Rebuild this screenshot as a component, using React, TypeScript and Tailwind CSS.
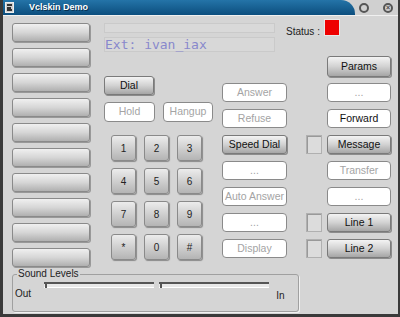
import type { ReactNode } from "react"

const font = "font-['Liberation_Sans',Arial,sans-serif]"

function Raised({ children, className = "" }: { children?: ReactNode; className?: string }) {
  return (
    <div
      className={`flex items-center justify-center rounded-[3px] border border-[#7a7a7a] bg-gradient-to-b from-[#f4f4f4] via-[#d2d2d2] to-[#a6a6a6] text-[10.5px] text-[#111] shadow-[1px_1px_0_#8c8c8c] ${className}`}
    >
      {children}
    </div>
  )
}

function Flat({ children, dark = false, className = "" }: { children?: ReactNode; dark?: boolean; className?: string }) {
  return (
    <div
      className={`flex items-center justify-center rounded-[4px] border-[1.5px] border-[#8a8a8a] bg-white text-[10.5px] ${dark ? "text-[#111]" : "text-[#a4a4a4]"} ${className}`}
    >
      {children}
    </div>
  )
}

function Key({ label }: { label: string }) {
  return (
    <div className="flex h-[26px] w-[25px] items-center justify-center rounded-[3px] border border-[#8a8a8a] bg-gradient-to-b from-[#ececec] to-[#b4b4b4] text-[10px] text-[#222] shadow-[1px_1px_1px_#8a8a8a]">
      {label}
    </div>
  )
}

function Square() {
  return <div className="h-[19px] w-[16px] border border-[#b0b0b0] bg-[#dcdcdc] shadow-[inset_1px_1px_0_#999]" />
}

function Track() {
  return (
    <div className="relative h-[5px] w-[110px] border-t-[2px] border-[#555] bg-[#e8e8e8] shadow-[0_1px_0_#fff]">
      <div className="absolute left-[1px] top-[-2px] h-[6px] w-[2px] bg-[#555]" />
    </div>
  )
}

export default function App() {
  const left = Array.from({ length: 10 })
  const keys = ["1", "2", "3", "4", "5", "6", "7", "8", "9", "*", "0", "#"]

  return (
    <div className={`${font} flex h-[317px] w-[400px] flex-col overflow-hidden border-b-[3px] border-l-[3px] border-r-[2px] border-[#3a3a3a] bg-[#d5d5d5]`}>
      {/* title bar */}
      <div className="flex h-[15px] shrink-0 items-stretch bg-[#d0d0d0]">
        <div className="flex w-[352px] items-center rounded-tr-[14px] bg-gradient-to-b from-[#2474a8] to-[#0c4e7e] pl-[2px]">
          <div className="flex h-[11px] w-[9px] flex-col justify-between border border-[#eee] bg-[#cfcfcf] p-[1px]">
            <div className="h-[2px] w-[5px] bg-[#333]" />
            <div className="h-[2px] w-[4px] bg-[#333]" />
            <div className="h-[2px] w-[5px] bg-[#333]" />
          </div>
          <span className="ml-[15px] text-[9px] font-bold text-white [text-shadow:1px_1px_0_#063050]">Vclskin Demo</span>
        </div>
        <div className="flex flex-1 items-center justify-end gap-[14px] pr-[5px]">
          <div className="flex h-[10px] w-[10px] items-center justify-center rounded-full border-[2px] border-[#555] text-[6px]" />
          <div className="flex h-[10px] w-[10px] items-center justify-center rounded-full border-[2px] border-[#555] text-[7px] font-bold leading-none text-[#444]">×</div>
        </div>
      </div>
      <div className="h-[1px] bg-[#f0f0f0]" />

      {/* body */}
      <div className="flex items-start pl-[9px]">
        <div className="mt-[7px] flex w-[78px] flex-col gap-[6px]">
          {left.map((_, i) => (
            <div
              key={i}
              className="h-[19px] rounded-[3px] border border-[#8a8a8a] bg-gradient-to-b from-[#f0f0f0] via-[#d6d6d6] to-[#b0b0b0] shadow-[1px_1px_0_#999]"
            />
          ))}
        </div>

        <div className="ml-[14px] flex flex-col">
          {/* display + status */}
          <div className="mt-[3px] flex items-start">
            <div className="mt-[4px] flex w-[171px] flex-col gap-[4px]">
              <div className="h-[10px] border border-[#cacaca] bg-[#d9d9d9]" />
              <div className="flex h-[15px] items-center border border-[#cacaca] bg-[#d8d8d8] font-['DejaVu_Sans_Mono',monospace] text-[13px] text-[#8888cc]">
                Ext: ivan_iax
              </div>
            </div>
            <span className="ml-[11px] mt-[5px] text-[10px] text-[#222]">Status :</span>
            <div className="ml-[4px] h-[17px] w-[16px] border border-[#e8e8e8] bg-[#ee0000]" />
          </div>

          {/* columns */}
          <div className="mt-[4px] flex items-start">
            <div className="flex w-[109px] flex-col">
              <Raised className="mt-[20px] h-[19px] w-[50px]">Dial</Raised>
              <div className="mt-[7px] flex gap-[8px]">
                <Flat className="h-[20px] w-[51px]">Hold</Flat>
                <Flat className="h-[20px] w-[50px]">Hangup</Flat>
              </div>
              <div className="ml-[7px] mt-[13px] grid grid-cols-[25px_25px_25px] gap-x-[8px] gap-y-[7px]">
                {keys.map((k) => (
                  <Key key={k} label={k} />
                ))}
              </div>
            </div>

            <div className="ml-[9px] mt-[27px] flex w-[65px] flex-col gap-[7px]">
              <Flat className="h-[19px]">Answer</Flat>
              <Flat className="h-[19px]">Refuse</Flat>
              <Raised className="h-[19px]">Speed Dial</Raised>
              <Flat className="h-[19px]">...</Flat>
              <Flat className="h-[19px]">Auto Answer</Flat>
              <Flat className="h-[19px]">...</Flat>
              <Flat className="h-[19px]">Display</Flat>
            </div>

            <div className="ml-[19px] mt-[79px] flex flex-col">
              <Square />
              <div className="mt-[59px]">
                <Square />
              </div>
              <div className="mt-[7px]">
                <Square />
              </div>
            </div>

            <div className="ml-[5px] flex w-[64px] flex-col gap-[7px]">
              <Raised className="h-[21px]">Params</Raised>
              <Flat className="mt-[-1px] h-[19px]">...</Flat>
              <Flat dark className="h-[19px]">Forward</Flat>
              <Raised className="h-[19px]">Message</Raised>
              <Flat className="h-[19px]">Transfer</Flat>
              <Flat className="h-[19px]">...</Flat>
              <Raised className="h-[19px]">Line 1</Raised>
              <Raised className="h-[19px]">Line 2</Raised>
            </div>
          </div>
        </div>
      </div>

      {/* sound levels */}
      <div className="relative ml-[9px] mt-[7px] h-[38px] w-[287px] rounded-[3px] border border-[#a0a0a0] shadow-[1px_1px_0_#f2f2f2]">
        <span className="absolute left-[4px] top-[-7px] bg-[#d5d5d5] px-[1px] text-[10px] leading-[12px] text-[#222]">Sound Levels</span>
        <div className="mt-[7px] flex items-start">
          <span className="ml-[2px] mt-[6px] text-[10px] leading-[12px] text-[#222]">Out</span>
          <div className="ml-[13px] flex gap-[5px]">
            <Track />
            <Track />
          </div>
          <span className="ml-[7px] mt-[8px] text-[10px] leading-[12px] text-[#222]">In</span>
        </div>
      </div>
    </div>
  )
}
